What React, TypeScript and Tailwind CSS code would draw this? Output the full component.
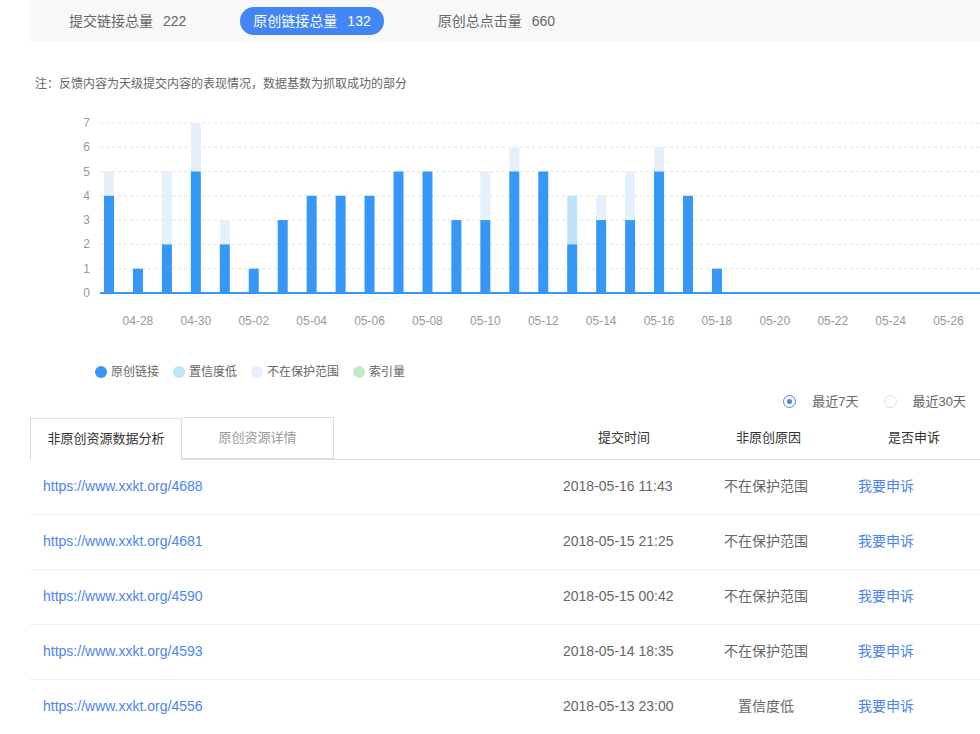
const font = { fontFamily: '"Liberation Sans", "Noto Sans CJK SC", sans-serif' };

// [原创, 置信度低, 不在保护范围]
const data: [number, number, number][] = [
  [4, 0, 1], [1, 0, 0], [2, 0, 3], [5, 0, 2], [2, 0, 1], [1, 0, 0], [3, 0, 0], [4, 0, 0],
  [4, 0, 0], [4, 0, 0], [5, 0, 0], [5, 0, 0], [3, 0, 0], [3, 0, 2], [5, 0, 1], [5, 0, 0],
  [2, 2, 0], [3, 0, 1], [3, 0, 2], [5, 0, 1], [4, 0, 0], [1, 0, 0],
];
const labels = ['04-28', '04-30', '05-02', '05-04', '05-06', '05-08', '05-10', '05-12', '05-14', '05-16', '05-18', '05-20', '05-22', '05-24', '05-26'];

const rows = [
  ['4688', '2018-05-16 11:43', '不在保护范围'],
  ['4681', '2018-05-15 21:25', '不在保护范围'],
  ['4590', '2018-05-15 00:42', '不在保护范围'],
  ['4593', '2018-05-14 18:35', '不在保护范围'],
  ['4556', '2018-05-13 23:00', '置信度低'],
];

function Chart() {
  const base = 182, unit = 24.3, x0 = 109, step = 28.95;
  return (
    <svg width="980" height="230" viewBox="0 0 980 230" className="block w-full h-[230px]" style={font}>
      {[0, 1, 2, 3, 4, 5, 6, 7].map((v) => (
        <g key={v}>
          <text x="90" y={base - v * unit + 4} fontSize="12" fill="#999" textAnchor="end">{v}</text>
          {v > 0 && <line x1="100" x2="980" y1={base - v * unit} y2={base - v * unit} stroke="#e3e3e3" strokeDasharray="3 3" />}
        </g>
      ))}
      {data.map(([a, b, c], i) => {
        const x = x0 + i * step - 5;
        return (
          <g key={i}>
            {c > 0 && <rect x={x} y={base - (a + b + c) * unit} width="10" height={c * unit} fill="#e6f0fa" />}
            {b > 0 && <rect x={x} y={base - (a + b) * unit} width="10" height={b * unit} fill="#bfe4f9" />}
            <rect x={x} y={base - a * unit} width="10" height={a * unit} fill="#3597f7" />
          </g>
        );
      })}
      <line x1="100" x2="980" y1={base} y2={base} stroke="#3597f7" strokeWidth="2" />
      {labels.map((l, i) => (
        <text key={l} x={x0 + step * (1 + 2 * i)} y={base + 32} fontSize="12" fill="#999" textAnchor="middle">{l}</text>
      ))}
    </svg>
  );
}

export default function App() {
  const legend = [
    ['原创链接', 'bg-[#3597f7]'],
    ['置信度低', 'bg-[#bfe4f9]'],
    ['不在保护范围', 'bg-[#e6f0fa]'],
    ['索引量', 'bg-[#bdeec8]'],
  ];
  return (
    <div className="w-[980px] h-[734px] overflow-hidden bg-white text-[#666]" style={font}>
      <div className="ml-[30px] h-[42px] bg-[#f8f8f8] flex items-center text-[14px] text-[#666]">
        <div className="ml-[39px]">提交链接总量<span className="ml-[10px]">222</span></div>
        <div className="ml-[54px] h-[28px] px-[13px] rounded-full bg-[#4285f4] text-white flex items-center">原创链接总量<span className="ml-[10px]">132</span></div>
        <div className="ml-[54px]">原创总点击量<span className="ml-[10px]">660</span></div>
      </div>
      <div className="ml-[35px] mt-[34px] text-[12px] text-[#666] leading-[16px]">注：反馈内容为天级提交内容的表现情况，数据基数为抓取成功的部分</div>
      <div className="mt-[19px]"><Chart /></div>
      <div className="ml-[95px] mt-[22px] flex items-center gap-[14px] text-[12px] text-[#666]">
        {legend.map(([t, c]) => (
          <div key={t} className="flex items-center gap-[4px]">
            <span className={`w-[12px] h-[12px] rounded-full ${c}`} />{t}
          </div>
        ))}
      </div>
      <div className="mt-[11px] flex justify-end items-center pr-[14px] text-[13px] text-[#666]">
        <span className="w-[13px] h-[13px] rounded-full border border-[#4285f4] flex items-center justify-center"><span className="w-[5px] h-[5px] rounded-full bg-[#4285f4]" /></span>
        <span className="ml-[16px]">最近7天</span>
        <span className="ml-[25px] w-[13px] h-[13px] rounded-full border border-[#ddd]" />
        <span className="ml-[16px]">最近30天</span>
      </div>
      <div className="ml-[30px] mt-[6px] flex items-end border-b border-[#ddd] h-[42px] text-[13px]">
        <div className="w-[152px] h-[42px] border border-[#ddd] border-b-0 bg-white flex items-center justify-center text-[#333] -mb-px">非原创资源数据分析</div>
        <div className="w-[152px] h-[42px] border border-[#ddd] border-l-0 flex items-center justify-center text-[#999]">原创资源详情</div>
        <div className="flex-1 h-[42px] flex items-center text-[#333]">
          <span className="ml-[264px] w-[120px]">提交时间</span>
          <span className="ml-[17px] w-[120px] pl-[1px]">非原创原因</span>
          <span className="ml-[33px]">是否申诉</span>
        </div>
      </div>
      <div className="ml-[30px]">
        {rows.map(([id, t, r]) => (
          <div key={id} className="h-[55px] border-b border-[#eee] flex items-center text-[14px]">
            <span className="ml-[13px] w-[520px] text-[#4c84f5]">https://www.xxkt.org/{id}</span>
            <span className="w-[143px] text-[#666]">{t}</span>
            <span className="w-[120px] text-center text-[#666]">{r}</span>
            <span className="w-[120px] text-center text-[#4c84f5]">我要申诉</span>
          </div>
        ))}
      </div>
    </div>
  );
}
